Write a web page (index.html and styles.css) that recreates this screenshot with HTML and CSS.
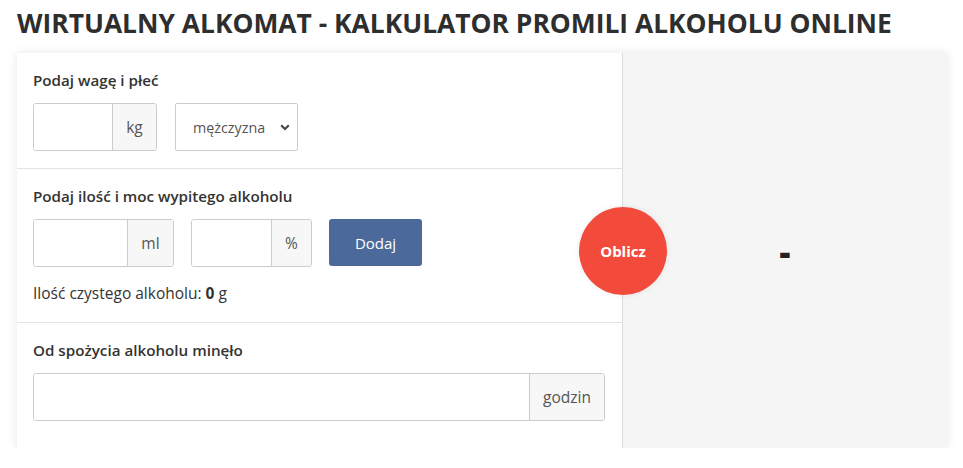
FILE: index.html
```html
<!DOCTYPE html>
<html lang="pl">
<head>
<meta charset="utf-8">
<title>Wirtualny alkomat</title>
<link rel="stylesheet" href="styles.css">
</head>
<body>
<h1 class="title">WIRTUALNY ALKOMAT - KALKULATOR PROMILI ALKOHOLU ONLINE</h1>
<div class="card">
  <div class="form">
    <section class="sec sec1">
      <div class="label">Podaj wagę i płeć</div>
      <div class="row">
        <div class="group g-kg"><input class="field" type="text"><span class="addon">kg</span></div>
        <div class="select">mężczyzna
          <svg class="chev" width="10" height="7" viewBox="0 0 10 7"><path d="M1.2 1.2 L5 5 L8.8 1.2" fill="none" stroke="#444" stroke-width="2"/></svg>
        </div>
      </div>
    </section>
    <section class="sec sec2">
      <div class="label">Podaj ilość i moc wypitego alkoholu</div>
      <div class="row">
        <div class="group g-ml"><input class="field" type="text"><span class="addon">ml</span></div>
        <div class="group g-pct"><input class="field" type="text"><span class="addon">%</span></div>
        <button class="btn">Dodaj</button>
      </div>
      <div class="info">Ilość czystego alkoholu: <b>0</b> g</div>
    </section>
    <section class="sec sec3">
      <div class="label">Od spożycia alkoholu minęło</div>
      <div class="group g-h"><input class="field" type="text"><span class="addon">godzin</span></div>
    </section>
  </div>
  <div class="result">
    <span class="dash">-</span>
    <button class="calc">Oblicz</button>
  </div>
</div>
</body>
</html>
```
FILE: styles.css
```css
* { box-sizing: border-box; }
body {
  margin: 0;
  padding: 0 16px 0 17px;
  font-family: "Open Sans", "Noto Sans", sans-serif;
  color: #333;
  background: #fff;
}
.title {
  margin: 0;
  padding-top: 5px;
  height: 53px;
  font-size: 26.4px;
  font-weight: 700;
  line-height: 36px;
  color: #2e2e2e;
}
.card {
  display: flex;
  width: 930px;
  height: 395px;
  box-shadow: 0 0 9px rgba(0,0,0,0.1);
  background: #fff;
}
.form {
  width: 605px;
  display: flex;
  flex-direction: column;
}
.sec {
  padding: 16px 17px 17px 16px;
  border-bottom: 1px solid #e3e3e3;
}
.sec2 { padding-bottom: 18px; }
.sec3 { border-bottom: none; padding-top: 16px; }
.label {
  font-size: 15.2px;
  font-weight: 600;
  line-height: 22px;
  margin-bottom: 12px;
  color: #333;
}
.row { display: flex; gap: 18px; }
.sec2 .row { gap: 17px; }
.group {
  display: flex;
  height: 48px;
  border: 1px solid #ccc;
  border-radius: 3px;
  overflow: hidden;
}
.field {
  flex: 1;
  min-width: 0;
  border: none;
  outline: none;
  margin: 0;
  padding: 0 10px;
  background: #fff;
}
.addon {
  display: flex;
  align-items: center;
  justify-content: center;
  border-left: 1px solid #ccc;
  background: #f7f7f7;
  color: #555;
  font-size: 15.5px;
}
.g-kg { width: 124px; }
.g-kg .addon { width: 44px; }
.g-ml { width: 141px; }
.g-ml .addon { width: 46px; }
.g-pct { width: 121px; }
.g-pct .addon { width: 40px; }
.g-h { width: 572px; }
.g-h .addon { width: 75px; }
.select {
  width: 123px;
  height: 48px;
  border: 1px solid #ccc;
  border-radius: 2px;
  display: flex;
  align-items: center;
  padding-left: 17px;
  font-size: 14.3px;
  color: #555;
  position: relative;
}
.chev { position: absolute; right: 7px; top: 20px; }
.btn {
  width: 93px;
  height: 47px;
  border: none;
  border-radius: 3px;
  background: #4b6a9b;
  color: #fff;
  font-family: inherit;
  font-size: 15px;
}
.info {
  font-size: 15.5px;
  line-height: 22px;
  margin-top: 15px;
  color: #333;
}
.info b { font-weight: 700; }
.result {
  flex: 1;
  position: relative;
  background: #f5f5f5;
  border-left: 1px solid #ddd;
  display: flex;
  align-items: center;
  justify-content: center;
}
.dash {
  font-size: 34px;
  font-weight: 800;
  color: #222;
  line-height: 1;
  margin-top: 0;
}
.calc {
  position: absolute;
  left: -44px;
  top: 154px;
  width: 88px;
  height: 88px;
  border-radius: 50%;
  border: none;
  background: #f24a3b;
  color: #fff;
  font-family: inherit;
  font-weight: 700;
  font-size: 15px;
  box-shadow: 0 0 6px rgba(0,0,0,0.08);
}
```
